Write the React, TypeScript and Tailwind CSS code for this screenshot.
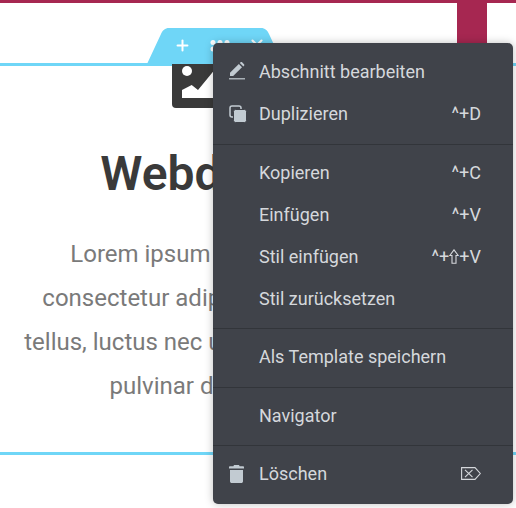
import React from 'react'
import { Plus, X } from 'lucide-react'

const font = { fontFamily: 'Roboto, sans-serif' }

function Row({ icon, label, keys }: { icon?: React.ReactNode; label: string; keys?: React.ReactNode }) {
  return (
    <div className="flex h-[42px] items-center pl-[16px] pr-[32px] text-[18px] text-[#d5d8dc]">
      <span className="flex w-[30px] shrink-0 items-center">{icon}</span>
      <span className="flex-1 pb-[2px]">{label}</span>
      {keys && <span className="flex items-center pb-[2px]">{keys}</span>}
    </div>
  )
}

function Group({ children, className }: { children: React.ReactNode; className: string }) {
  return <div className={className}>{children}</div>
}

function PencilIcon() {
  return (
    <svg width="16" height="18" viewBox="0 0 16 18" fill="#c2cbd2" className="-mt-[2px]">
      <path d="M1 14V10.800L9.800 2 13 5.200 4.200 14z" />
      <path d="M10.800.9l.8-.6c.5-.4 1.100-.4 1.500 0l1.900 1.900c.4.4.4 1 0 1.500l-.6.7z" />
      <rect y="16.200" width="16" height="1.200" />
    </svg>
  )
}

function CopyIcon() {
  return (
    <svg width="18" height="18" viewBox="0 0 18 18">
      <rect x="1" y="1" width="11" height="11" rx="2" fill="none" stroke="#c2cbd2" strokeWidth="1.500" />
      <rect x="4.500" y="4.500" width="13" height="13" rx="2" fill="#c2cbd2" stroke="#40434a" strokeWidth="1" />
    </svg>
  )
}

function TrashIcon() {
  return (
    <svg width="15" height="18" viewBox="0 0 15 18" fill="#c2cbd2">
      <path d="M5 0h5l.6 1.200H14c.5 0 1 .4 1 1V3.500H0V2.200c0-.6.5-1 1-1h3.400z" />
      <path d="M1 5h13v11.200c0 1-.8 1.800-1.800 1.800H2.800C1.800 18 1 17.200 1 16.200z" />
    </svg>
  )
}

function ShiftIcon() {
  return (
    <svg width="10" height="15" viewBox="0 0 10 15" fill="none" stroke="#d5d8dc" strokeWidth="1.100">
      <path d="M5 .8.8 6.500H3V14.300H7V6.500H9.200z" />
    </svg>
  )
}

function DeleteKeyIcon() {
  return (
    <svg width="20" height="13" viewBox="0 0 20 13" fill="none" stroke="#d5d8dc" strokeWidth="1.100">
      <path d="M.6.6H14L19.300 6.500 14 12.400H.6z" />
      <path d="M4 2.800 11.500 10.200M11.500 2.800 4 10.200" />
    </svg>
  )
}

function ContextMenu() {
  return (
    <div className="absolute left-[213px] top-[43px] w-[300px] rounded-[5px] bg-[#40434a] shadow-[0_0_8px_rgba(0,0,0,0.25)]">
      <Group className="border-b border-[#32353a] pt-[8px] pb-[9px]">
        <Row icon={<PencilIcon />} label="Abschnitt bearbeiten" />
        <Row icon={<CopyIcon />} label="Duplizieren" keys="^+D" />
      </Group>
      <Group className="border-b border-[#32353a] pt-[7px] pb-[8px]">
        <Row label="Kopieren" keys="^+C" />
        <Row label="Einfügen" keys="^+V" />
        <Row label="Stil einfügen" keys={<>^+<ShiftIcon />+V</>} />
        <Row label="Stil zurücksetzen" />
      </Group>
      <Group className="border-b border-[#32353a] pt-[7px] pb-[9px]">
        <Row label="Als Template speichern" />
      </Group>
      <Group className="border-b border-[#32353a] pt-[7px] pb-[8px]">
        <Row label="Navigator" />
      </Group>
      <Group className="pt-[7px] pb-[9px]">
        <Row icon={<TrashIcon />} label="Löschen" keys={<DeleteKeyIcon />} />
      </Group>
    </div>
  )
}

function SectionHandle() {
  return (
    <div className="absolute left-[147px] top-[28px] h-[36px] w-[136px]">
      <svg className="absolute inset-0" width="136" height="36" viewBox="0 0 136 36" fill="#6fd6f7">
        <path d="M0 36 14 6C15.500 2.500 18 0 22 0H114C118 0 120.500 2.500 122 6L136 36z" />
      </svg>
      <Plus className="absolute left-[27px] top-[9px] text-white" size={17} strokeWidth={2.800} />
      <svg className="absolute left-[62px] top-[11px]" width="24" height="14" viewBox="0 0 24 14" fill="#fff">
        <circle cx="4" cy="3.500" r="2.500" />
        <circle cx="11" cy="3.500" r="2.500" />
        <circle cx="18" cy="3.500" r="2.500" />
        <circle cx="4" cy="10" r="2.500" />
        <circle cx="11" cy="10" r="2.500" />
        <circle cx="18" cy="10" r="2.500" />
      </svg>
      <X className="absolute left-[101px] top-[8px] text-white" size={18} strokeWidth={2.800} />
    </div>
  )
}

function ImageIcon() {
  return (
    <svg width="104" height="64" viewBox="0 0 104 64" className="ml-[172px] -mb-[8px] -mt-[22px]">
      <rect width="104" height="64" rx="4" fill="#3a3a3a" />
      <circle cx="15" cy="27" r="5" fill="#fff" />
      <path d="M10 54V46L19.700 41 26 46 41 27.700 60 50V54z" fill="#fff" />
    </svg>
  )
}

export default function App() {
  return (
    <div className="relative h-[508px] w-[516px] overflow-hidden bg-white" style={font}>
      <div className="h-[3px] bg-[#a62751]" />
      <div className="flex h-[60px] justify-end pr-[29px]">
        <div className="w-[30px] bg-[#a62751]" />
      </div>
      <div className="h-[392px] border-y-[3px] border-[#6fd6f7]">
        <div className="w-[439px]">
          <ImageIcon />
          <h2 className="mt-[47px] whitespace-nowrap text-center text-[48px] font-semibold leading-[54px] text-[#3a3a3a]">
            Webdesign
          </h2>
          <p className="mt-[31px] whitespace-nowrap text-center text-[24px] leading-[44px] text-[#7a7a7a]">
            Lorem ipsum dolor sit amet,
            <br />
            consectetur adipiscing elit. Ut elit
            <br />
            tellus, luctus nec ullamcorper mattis,
            <br />
            pulvinar dapibus leo.
          </p>
        </div>
      </div>
      <SectionHandle />
      <ContextMenu />
    </div>
  )
}
